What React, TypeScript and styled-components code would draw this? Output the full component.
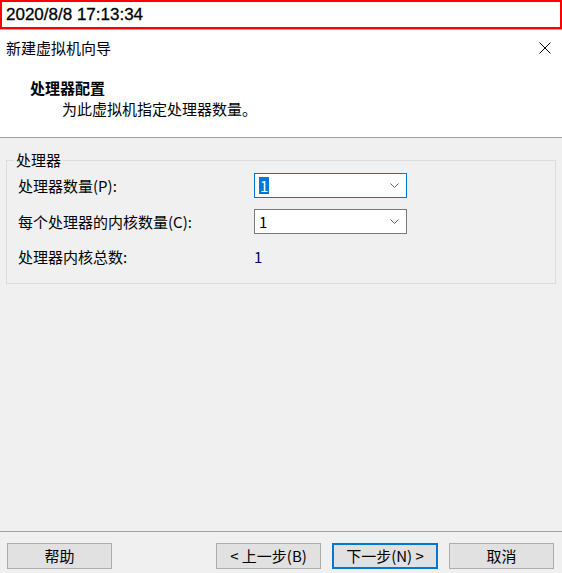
import React from "react";
import styled, { createGlobalStyle } from "styled-components";

const Global = createGlobalStyle`
  html, body { margin: 0; padding: 0; background: #f0f0f0; }
  * { box-sizing: border-box; }
`;

const Page = styled.div`
  width: 562px;
  height: 573px;
  display: flex;
  flex-direction: column;
  background: #f0f0f0;
  font-family: "Noto Sans CJK SC", "Noto Sans", sans-serif;
  font-size: 15px;
  color: #000;
  overflow: hidden;
`;

const TimeBar = styled.div`
  height: 29px;
  width: 562px;
  border: 2px solid #ff0000;
  background: #fff;
  display: flex;
  align-items: center;
  padding-left: 4px;
  font-family: "Liberation Sans", Arial, sans-serif;
  font-size: 17px;
  color: #000;
  -webkit-text-stroke: 0.3px #000;
`;

const Rule = styled.div<{ $color: string }>`
  height: 1px;
  flex: 0 0 1px;
  background: ${(p) => p.$color};
`;

const Header = styled.div`
  background: #fff;
  height: 107px;
  display: flex;
  flex-direction: column;
`;

const TitleRow = styled.div`
  height: 36px;
  display: flex;
  align-items: center;
  justify-content: space-between;
  padding: 0 11px 0 6px;
  line-height: 20px;
`;

const CloseIcon = styled.svg`
  width: 12px;
  height: 12px;
  display: block;
`;

const Heading = styled.div`
  margin-top: 12px;
  padding-left: 30px;
  font-weight: 700;
  line-height: 20px;
`;

const SubHeading = styled.div`
  margin-top: 1px;
  padding-left: 62px;
  line-height: 20px;
`;

const Body = styled.div`
  flex: 1;
  padding: 12px 6px 0 6px;
`;

const Group = styled.fieldset`
  margin: 0;
  padding: 0;
  border: 1px solid #dcdcdc;
  min-width: 0;
`;

const Legend = styled.legend`
  margin-left: 7px;
  padding: 0 2px;
  line-height: 20px;
`;

const Grid = styled.div`
  display: grid;
  grid-template-columns: 236px 153px;
  grid-template-rows: 25px 25px 20px;
  row-gap: 11px;
  align-items: center;
  padding: 3px 0 18px 11px;

  & > :nth-child(5),
  & > :nth-child(6) {
    margin-top: 3px;
  }
`;

const Label = styled.div`
  line-height: 20px;
  white-space: nowrap;
`;

const Select = styled.div<{ $focused?: boolean }>`
  height: 25px;
  width: 153px;
  background: #fff;
  border: 1px solid ${(p) => (p.$focused ? "#0078d7" : "#7a7a7a")};
  display: flex;
  align-items: center;
  justify-content: space-between;
  padding: 0 7px 0 4px;
  line-height: 17px;
`;

const Selected = styled.span`
  background: #0078d7;
  color: #fff;
  padding: 0 1px;
`;

const Chevron = styled.svg`
  width: 9px;
  height: 5px;
  display: block;
`;

const Value = styled.div`
  color: #000060;
  line-height: 20px;
`;

const Footer = styled.div`
  height: 41px;
  display: flex;
  align-items: flex-start;
  padding: 11px 8px 0 7px;
`;

const Button = styled.div<{ $primary?: boolean }>`
  width: ${(p) => (p.$primary ? "106px" : "105px")};
  height: 26px;
  background: #e1e1e1;
  border: ${(p) => (p.$primary ? "2px solid #0078d7" : "1px solid #adadad")};
  display: flex;
  align-items: center;
  justify-content: center;
  line-height: 20px;
  white-space: nowrap;
`;

const Spacer = styled.div`
  flex: 1;
`;

const ButtonGap = styled.div`
  width: 11px;
`;

const ChevronDown = () => (
  <Chevron viewBox="0 0 9 5">
    <polyline points="0.5,0.5 4.5,4.5 8.5,0.5" fill="none" stroke="#606060" strokeWidth="1" />
  </Chevron>
);

export default function App() {
  return (
    <Page>
      <Global />
      <TimeBar>2020/8/8 17:13:34</TimeBar>
      <Rule $color="#b4b4b4" />
      <Header>
        <TitleRow>
          <span>新建虚拟机向导</span>
          <CloseIcon viewBox="0 0 12 12">
            <path d="M0.5 0.5 L11.5 11.5 M11.5 0.5 L0.5 11.5" stroke="#000" strokeWidth="1" fill="none" />
          </CloseIcon>
        </TitleRow>
        <Heading>处理器配置</Heading>
        <SubHeading>为此虚拟机指定处理器数量。</SubHeading>
      </Header>
      <Rule $color="#a0a0a0" />
      <Body>
        <Group>
          <Legend>处理器</Legend>
          <Grid>
            <Label>处理器数量(P):</Label>
            <Select $focused>
              <Selected>1</Selected>
              <ChevronDown />
            </Select>
            <Label>每个处理器的内核数量(C):</Label>
            <Select>
              <span>1</span>
              <ChevronDown />
            </Select>
            <Label>处理器内核总数:</Label>
            <Value>1</Value>
          </Grid>
        </Group>
      </Body>
      <Rule $color="#a0a0a0" />
      <Footer>
        <Button>帮助</Button>
        <Spacer />
        <Button>&lt; 上一步(B)</Button>
        <ButtonGap />
        <Button $primary>下一步(N) &gt;</Button>
        <ButtonGap />
        <Button>取消</Button>
      </Footer>
    </Page>
  );
}
